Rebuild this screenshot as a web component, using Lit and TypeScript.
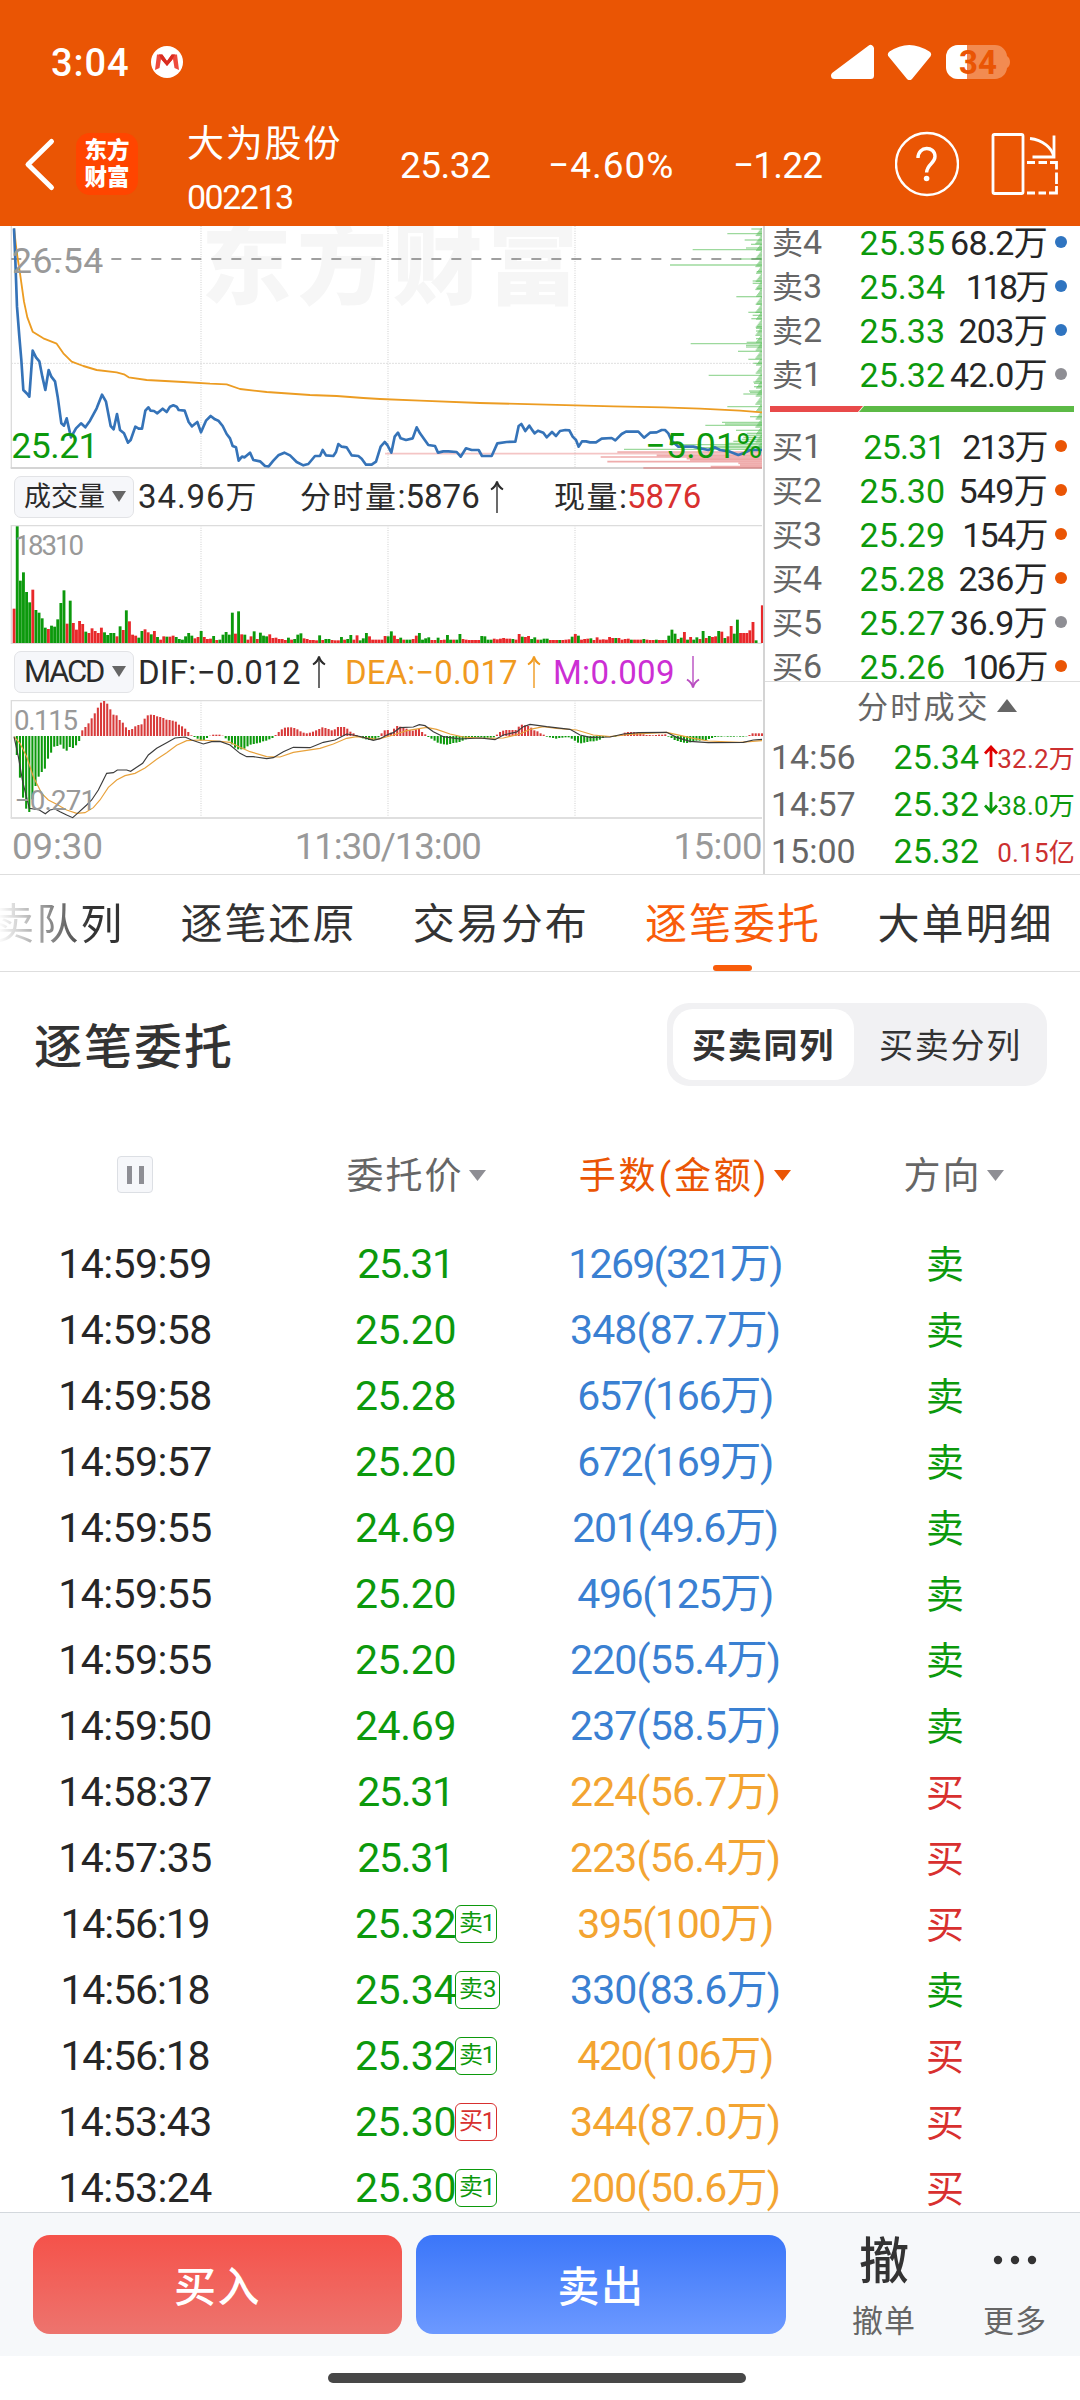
import { LitElement, html, svg, css, nothing } from "lit";
import { customElement, property } from "lit/decorators.js";

const GREEN = "#0c990c";

/* Letter spacing (em) that keeps figures with narrow "1" glyphs compact. */
const track = (t: string, base = 0): string => {
  const ones = (t.match(/1/g) ?? []).length;
  const wan = /[万亿]/.test(t) ? 0.02 : 0;
  return `letter-spacing:${(base - (0.11 * ones) / t.length - wan).toFixed(4)}em`;
};

/* Chart coordinates are in thirds of a pixel; the two halves of the session join at x = 1140. */
const line = (a: string, b: string): string => {
  const second = b
    .trim()
    .split(/\s+/)
    .map((p) => {
      const [x, y] = p.split(",").map(Number);
      return `${x + 1140},${y}`;
    });
  return a.trim() + " " + second.join(" ");
};

const PRICE = line(
  `42,25 46,120 51,260 58,350 64,420 70,510 82,522 88,530 98,392 108,412 118,424 127,470 136,510 146,450 154,470 165,484 173,530 184,610 192,617 200,595 213,652 228,625 243,610 256,622 270,602 290,565 306,524 318,545 332,618 341,628 351,582 360,630 372,640 384,668 392,660 406,620 416,626 426,626 436,572 445,562 452,572 462,573 472,580 488,566 500,576 510,560 520,556 530,560 536,570 554,572 566,606 576,619 592,606 603,637 618,602 632,588 645,598 655,602 668,618 680,642 690,655 698,678 708,682 716,722 726,710 734,712 750,698 760,720 780,724 795,738 806,739 820,722 835,706 853,698 870,706 890,726 910,736 925,732 945,708 960,708 968,690 978,706 1000,708 1008,696 1015,672 1025,680 1040,682 1055,706 1075,708 1085,716 1098,734 1115,734 1128,725`,
  `2,680 14,666 22,675 34,698 44,650 54,638 62,655 78,660 98,655 110,622 120,640 145,675 165,678 174,698 190,694 205,694 230,696 242,710 258,685 275,690 296,690 306,708 335,708 352,670 380,666 406,665 416,618 424,612 436,633 448,617 458,632 464,640 474,632 490,638 500,652 516,636 528,648 540,633 556,630 568,631 578,650 588,660 596,680 606,664 618,664 630,667 648,667 665,656 695,654 706,661 725,642 738,635 775,635 792,653 810,638 830,637 845,630 855,630 865,640 875,662 895,680 920,680 940,680 965,686 985,690 1005,682 1020,690 1050,695 1075,705 1090,700 1110,690 1130,690 1146,690`
);
const AVERAGE = line(
  `42,25 50,95 60,160 72,245 82,292 98,335 130,355 170,371 190,400 215,425 250,438 290,450 350,457 372,463 386,472 440,480 550,486 630,491 680,493 720,507 800,516 930,525 1010,528 1090,534`,
  `0,537 120,542 300,549 500,554 700,559 850,562 960,566 1080,572 1146,577`
);
const DIF = line(
  `42,680 55,740 68,815 88,895 118,900 136,911 150,900 165,897 180,905 200,915 218,923 235,908 260,885 275,870 295,840 310,810 320,790 340,788 352,780 380,780 392,784 410,772 428,760 445,735 470,715 500,698 525,684 555,681 575,690 610,702 635,695 660,694 690,705 720,730 740,740 760,740 800,746 820,743 850,725 880,712 930,713 970,697 1005,690 1040,672 1060,675 1090,682 1120,691`,
  `0,686 25,673 40,668 60,653 100,651 118,644 135,647 160,665 190,680 240,687 300,684 345,689 370,675 410,666 430,650 450,643 500,650 570,658 600,675 630,682 690,681 730,672 775,668 860,667 890,682 930,694 985,698 1090,697 1120,690 1146,688`
);
const DEA = line(
  `42,680 60,700 80,740 100,800 125,850 145,870 170,883 200,900 230,910 255,908 280,893 300,870 325,832 350,810 375,797 405,790 435,774 470,748 500,728 530,706 560,692 600,690 650,693 690,697 720,712 750,725 800,740 840,741 880,727 960,715 1000,702 1040,685 1070,680 1130,688`,
  `0,686 40,675 80,662 140,652 170,658 210,672 250,681 310,685 370,684 420,672 450,658 490,650 530,655 590,660 640,675 690,680 740,674 800,670 860,667 890,674 940,685 985,693 1080,697 1146,692`
);

/* Per-minute volume: positive is an up minute (red), negative a down minute (green). */
const VOLUME = [
  103, -350, -187, -212, -153, -122, 160, -99, -91, -74, -46, 42, -52, -49, -71, -120, -158, 58, -127, 60,
  40, 66, 57, -34, 30, 44, 36, 30, 46, -32, -24, -30, -30, 20, -50, 39, -98, 65, 25, 22,
  -16, -36, 41, 32, -26, 36, -18, 10, 20, -19, 19, 22, -18, -12, -10, -20, -30, -22, 14, 18,
  -36, 18, 12, 13, -21, 9, -10, -25, -33, -25, -91, 28, -95, 26, -25, 10, 20, -35, 12, -31,
  -22, -20, 26, 15, 16, 12, 12, 9, -16, 10, -12, -25, -29, 14, 12, 9, 9, 8, -23, 9,
  -12, -12, 9, 8, 8, -18, 10, -12, -24, 10, 23, -8, -14, -30, 20, 10, 10, 10, 10, 21,
  -20, -35, 22, 12, -16, 10, -10, -10, 12, 22, -30, -10, -14, -17, 9, 9, -16, 9, 10, -24,
  -10, 10, -10, -27, 12, 10, 9, 9, 9, 9, -21, -20, -10, -10, 13, 11, 13, 15, 13, 13,
  -12, 10, 27, -19, 18, 21, -12, -17, 10, -10, -13, -13, 9, 9, 9, -9, 9, 10, 11, -19,
  27, -22, 10, 12, 13, -14, 9, 17, 10, 11, 10, 18, 15, -15, 15, 10, 12, 13, -10, 10,
  10, 10, -12, 10, 9, 9, -10, 9, 9, 9, -22, -40, -28, 12, -16, 33, -10, 18, -10, -17,
  12, -36, 15, -21, 18, 20, -36, 34, -15, 20, 51, -28, -70, 30, 30, 30, 38, 63, -8, 0, 113,
];

const MACD = [
  0, -57, -125, -185, -218, -228, -190, -150, -122, -108, -98, -68, -50, -32, -30, -26, -38, -44, -33, -36,
  -28, -15, 17, 27, 38, 53, 68, 85, 100, 105, 97, 80, 64, 62, 48, 40, 26, 18, 21, 29,
  33, 35, 52, 62, 64, 63, 59, 57, 54, 49, 48, 46, 43, 34, 29, 22, 12, 2, -3, -8,
  -13, -12, -6, 1, 4, 4, 4, 1, -7, -14, -25, -35, -40, -40, -38, -31, -26, -24, -22, -20,
  -16, -14, -10, -6, 3, 12, 20, 25, 26, 26, 24, 20, 14, 10, 8, 10, 13, 17, 21, 26,
  24, 21, 17, 20, 27, 27, 27, 22, 13, 8, 3, -3, -7, -10, -12, -12, -11, -4, 8, 17,
  18, 10, 22, 30, 28, 26, 22, 18, 16, 20, 22, 12, 5, -3, -8, -14, -20, -23, -25, -26,
  -24, -21, -20, -18, -14, -10, -7, -6, -4, -3, -4, -6, -5, -5, -4, 4, 12, 16, 18, 18,
  18, 18, 28, 34, 32, 30, 25, 17, 14, 8, 4, -2, -4, -6, -8, -6, -5, -4, -4, -8,
  -14, -20, -22, -20, -18, -16, -16, -14, -11, -6, -3, -2, -2, -2, 2, 4, 10, 12, 12, 12,
  10, 9, 5, 3, 3, 2, 3, 4, 4, 5, -2, -6, -12, -15, -18, -20, -21, -19, -16, -14,
  -14, -12, -12, -9, -6, -3, -2, -2, -1, -2, -2, -2, -1, -2, -2, -1, 3, 8, 8, 8, 8,
];

/* Price distribution along the right edge: [y, left edge]. */
const CHIPS_DOWN: [number, number][] = [
  [27, 1114], [41, 1042], [60, 1094], [73, 1113], [84, 1098], [89, 938], [117, 1080], [135, 870], [155, 1130],
  [183, 1118], [190, 1118], [205, 1130], [230, 1069], [252, 1130], [277, 1105], [286, 1118], [296, 1114],
  [320, 1130], [325, 1128], [333, 1128], [356, 1128], [367, 1100], [371, 932], [376, 1098], [381, 1098], [394, 1074],
  [418, 1105], [430, 1120], [466, 986], [486, 1120], [490, 1122], [500, 1122], [513, 1107], [517, 1110], [522, 1090],
  [560, 1042], [590, 1110], [607, 1026], [612, 1035], [616, 976], [631, 1068], [640, 1100], [646, 1080], [652, 1090],
  [658, 1085], [664, 1060], [670, 1040], [674, 900], [679, 1000], [683, 940], [688, 732],
];
const CHIPS_UP: [number, number][] = [
  [696, 712], [701, 15], [706, 830], [711, 662], [716, 920], [720, 930], [725, 682], [730, 1075], [735, 1080], [740, 992], [744, 790],
];

const bars = (data: number[], zero: number, w: number, opp: boolean) =>
  data.map((v, i) => {
    if (!v) return nothing;
    const h = Math.abs(v);
    const x = 38 + i * 9.353;
    const y = opp ? (v > 0 ? zero - h : zero) : zero - h;
    return svg`<rect x=${x} y=${y} width=${w} height=${h} fill=${v > 0 ? (opp ? "#d83a3a" : "#e8282a") : GREEN}></rect>`;
  });

const grid = (top: number, bottom: number) => svg`
  <g stroke="#dcdcdc" stroke-width="4" stroke-dasharray="3 4">
    <line x1="603" x2="603" y1=${top} y2=${bottom}></line>
    <line x1="1164" x2="1164" y1=${top} y2=${bottom}></line>
    <line x1="1725" x2="1725" y1=${top} y2=${bottom}></line>
  </g>`;

const arrow = (color: string, down = false) => html`
  <svg width="14" height="34" viewBox="0 0 14 34" fill="none" stroke=${color}>
    <g transform=${down ? "rotate(180 7 17)" : ""}>
      <path d="M7 33V2" stroke-width="1.4"></path>
      <path d="M1 9.500Q6 6.500 7 1.500Q8 6.500 13 9.500" stroke-width="2"></path>
    </g>
  </svg>`;

@customElement("quote-header")
class QuoteHeader extends LitElement {
  static styles = css`
    :host { display: block; height: 226px; background: #ea5504; color: #fff; font-family: Roboto, "Noto Sans CJK SC", sans-serif; }
    .status { height: 102px; box-sizing: border-box; padding: 22px 70px 0 51px; display: flex; align-items: center; }
    .clock { width: 100px; font-size: 38px; font-weight: 500; line-height: 80px; letter-spacing: 0.9px; padding-top: 2px; }
    .grow { flex: 1; }
    .bar { height: 124px; display: grid; grid-template-columns: 76px 111px 213px 148px 185px 162px 95px 90px; align-items: center; }
    .back { margin-left: 23px; }
    .logo { width: 62px; height: 62px; border-radius: 14px; background: #ff4500; font-size: 22.5px; line-height: 27px; font-weight: 900; display: flex; flex-direction: column; align-items: center; justify-content: center; }
    .title { padding-top: 12px; }
    .name { font-size: 37px; line-height: 46px; letter-spacing: 1.8px; }
    .code { font-size: 34px; line-height: 42px; letter-spacing: -1.5px; margin-top: 8px; }
    .num { font-size: 37px; line-height: 52px; padding-top: 3px; white-space: nowrap; letter-spacing: -0.5px; }
    .pct { letter-spacing: 1px; }
    svg { display: block; }
  `;
  render() {
    return html`
      <div class="status">
        <span class="clock">3:04</span>
        <svg width="32" height="32" viewBox="0 0 32 32">
          <circle cx="16" cy="16" r="16" fill="#fff"></circle>
          <path d="M6 8.500L11 8.500L16 15L21 8.500L26 8.500L28 24L23.500 22L22 13L16 20L10 13L8.500 22L4 24Z" fill="#ee4a3c"></path>
          <path d="M8 8.500H11.500L16 15L20.500 8.500H24L21 14L16 20L10 13Z" fill="#d92c20"></path>
        </svg>
        <span class="grow"></span>
        <svg width="180" height="36" viewBox="830 44 180 36">
          <path d="M834.500 75.500L870.500 48.500V75.500Z" fill="#fff" stroke="#fff" stroke-width="7" stroke-linejoin="round"></path>
          <path d="M891.500 54.500Q909 42.500 927.500 54.500L909.500 76.500Z" fill="#fff" stroke="#fff" stroke-width="7" stroke-linejoin="round"></path>
          <path d="M958 45H995A12 12 0 0 1 1007 56Q1010 58 1010 62T1007 68A12 12 0 0 1 995 79H958A12 12 0 0 1 946 67V57A12 12 0 0 1 958 45Z" fill="#f28b51"></path>
          <path d="M967 45H958A12 12 0 0 0 946 57V67A12 12 0 0 0 958 79H967Z" fill="#fff"></path>
          <text x="959" y="74" font-size="33" font-weight="700" fill="#ea5504" textLength="38">34</text>
        </svg>
      </div>
      <div class="bar">
        <svg class="back" width="34" height="56" viewBox="0 0 34 56" fill="none" stroke="#fff" stroke-width="5" stroke-linecap="round" stroke-linejoin="round">
          <path d="M28.500 5.500L5 28.500L28.500 51.500"></path>
        </svg>
        <div class="logo"><span>东方</span><span>财富</span></div>
        <div class="title"><div class="name">大为股份</div><div class="code">002213</div></div>
        <div class="num">25.32</div>
        <div class="num pct">−4.60%</div>
        <div class="num" style=${track("−1.22")}>−1.22</div>
        <svg width="64" height="66" viewBox="895 131 64 66" fill="none" stroke="#fff">
          <circle cx="927" cy="164" r="31" stroke-width="2.400"></circle>
          <path d="M918 158C918 145.500 935 145.500 935 156.500C935 163.500 927 164 926.600 172.500" stroke-width="3.400"></path>
          <circle cx="926.600" cy="178.500" r="2.800" fill="#fff" stroke="none"></circle>
        </svg>
        <svg width="68" height="64" viewBox="989 132 68 64" fill="none" stroke="#fff" stroke-width="2.800">
          <rect x="992" y="134.500" width="30" height="59" rx="1.500"></rect>
          <path d="M1029 138.500C1042 140 1051 148 1052.500 156"></path>
          <path d="M1053 135.500V157H1031.500"></path>
          <path d="M1026 162.500H1034M1037.500 162.500H1046M1049 162.500H1055.500V169.500M1055.500 172.500V184M1055.500 186V193H1048M1045 193H1037.500M1034 193H1026"></path>
        </svg>
      </div>`;
  }
}

@customElement("intraday-charts")
class IntradayCharts extends LitElement {
  static styles = css`
    :host { display: block; width: 763px; height: 648px; font-family: Roboto, "Noto Sans CJK SC", sans-serif; color: #2b2b2b; }
    svg { display: block; }
    .legend { height: 55px; display: grid; align-items: center; font-size: 33px; line-height: 50px; white-space: nowrap; padding: 0 0 2px 14px; box-sizing: border-box; }
    .vol { grid-template-columns: 124px 162px 190px 64px 200px; }
    .macd { grid-template-columns: 124px 174px 33px 182px 26px 133px 20px; padding-bottom: 2px; }
    .text { padding-top: 2px; }
    .pill { width: 120px; height: 42px; box-sizing: border-box; border: 1px solid #e2e3e6; border-radius: 7px; background: #f6f7fa; display: flex; align-items: center; justify-content: space-between; padding: 0 7px 0 9px; font-size: 27px; line-height: 38px; }
    .latin { font-size: 31px; letter-spacing: -2.2px; }
    .total { letter-spacing: 0.9px; }
    .dif { letter-spacing: 0.45px; }
    .dea { color: #f09a1f; letter-spacing: 0.1px; }
    .m { color: #cc2fd4; letter-spacing: 0.3px; }
    .now { color: #d8302f; }
    .cjk { font-size: 31px; letter-spacing: 1.5px; }
    .axis { height: 54px; display: flex; justify-content: space-between; align-items: center; padding: 0 1px 1px 12px; box-sizing: border-box; font-size: 36.5px; line-height: 50px; color: #999; }
    .axis .mid { margin-right: 1px; letter-spacing: -1px; }
    .axis .end { letter-spacing: -0.5px; }
  `;
  render() {
    return html`
      <svg width="763" height="244" viewBox="0 18 2289 732" font-family="Roboto, sans-serif">
        <text x="604" y="232" font-family="Noto Sans CJK SC" font-weight="900" font-size="270" fill="#f6f6f6" textLength="1130">东方财富</text>
        ${grid(18, 744)}
        <line x1="34" x2="2286" y1="430" y2="430" stroke="#cfcfcf" stroke-width="3" stroke-dasharray="4 5"></line>
        <line x1="34" x2="34" y1="18" y2="744" stroke="#dcdcdc" stroke-width="4"></line>
        <line x1="32" x2="2286" y1="744" y2="744" stroke="#d4d4d4" stroke-width="6"></line>
        <line x1="34" x2="2286" y1="117" y2="117" stroke="#808080" stroke-width="5" stroke-dasharray="30 30"></line>
        <g stroke="#3ab03a" stroke-opacity=".5" stroke-width="4">
          ${Array.from({ length: 165 }, (_, i) => svg`<line x1=${2286 - 4 - ((i * 37) % 17)} x2="2286" y1=${26 + i * 4.05} y2=${26 + i * 4.05}></line>`)}
        </g>
        <g stroke="#5cc05c" stroke-opacity=".6" stroke-width="4">
          ${CHIPS_DOWN.map(([y, x]) => svg`<line x1=${x + 1140} x2="2286" y1=${y} y2=${y}></line>`)}
        </g>
        <g stroke="#e05a5a" stroke-width="5">
          ${CHIPS_UP.map(([y, x]) => svg`<line x1=${x + 1140} x2="2286" y1=${y} y2=${y} stroke-opacity=${x < 100 ? 0.35 : 0.5}></line>`)}
        </g>
        <polyline points=${AVERAGE} fill="none" stroke="#ec9c22" stroke-width="5.500" stroke-linejoin="round"></polyline>
        <polyline points=${PRICE} fill="none" stroke="#3573b8" stroke-width="8" stroke-linejoin="round"></polyline>
        <text x="36" y="158" font-size="107" fill="#999" textLength="274">26.54</text>
        <text x="34" y="714" font-size="107" fill=${GREEN} textLength="262">25.21</text>
        <text x="1936" y="714" font-size="107" fill=${GREEN} textLength="351">−5.01%</text>
      </svg>
      <div class="legend vol">
        <span class="pill">成交量 ${this.caret()}</span>
        <span class="text total">34.96<span class="cjk">万</span></span>
        <span class="text"><span class="cjk">分时量</span>:5876</span>
        ${arrow("#2b2b2b")}
        <span class="text"><span class="cjk">现量</span>:<span class="now">5876</span></span>
      </div>
      <svg width="763" height="120" viewBox="0 45 2289 360" font-family="Roboto, sans-serif">
        ${grid(46, 400)}
        <path d="M2286 47H34V400H2286" fill="none" stroke="#dcdcdc" stroke-width="4"></path>
        ${bars(VOLUME, 399, 8.6, false)}
        <text x="44" y="134" font-size="83" fill="#999" textLength="208">18310</text>
      </svg>
      <div class="legend macd">
        <span class="pill"><span class="latin">MACD</span> ${this.caret()}</span>
        <span class="text dif">DIF:−0.012</span>${arrow("#2b2b2b")}
        <span class="text dea">DEA:−0.017</span>${arrow("#f09a1f")}
        <span class="text m">M:0.009</span>${arrow("#b84cc0", true)}
      </div>
      <svg width="763" height="120" viewBox="0 570 2289 360" font-family="Roboto, sans-serif">
        ${grid(571, 924)}
        <path d="M2286 572H34V924" fill="none" stroke="#dcdcdc" stroke-width="4"></path>
        <path d="M32 924H2286" stroke="#dfdfdf" stroke-width="6"></path>
        ${bars(MACD, 678, 6.2, true)}
        <polyline points=${DEA} fill="none" stroke="#e8a23c" stroke-width="3.500"></polyline>
        <polyline points=${DIF} fill="none" stroke="#3c3c3c" stroke-width="3.500"></polyline>
        <text x="42" y="659" font-size="83" fill="#999" textLength="192">0.115</text>
        <text x="44" y="899" font-size="83" fill="#999" textLength="244">−0.271</text>
      </svg>
      <div class="axis"><span>09:30</span><span class="mid">11:30/13:00</span><span class="end">15:00</span></div>`;
  }
  private caret() {
    return html`<svg width="14" height="11" viewBox="0 0 14 11"><path d="M0 0H14L7 11Z" fill="#666"></path></svg>`;
  }
}

@customElement("order-book")
class OrderBook extends LitElement {
  static styles = css`
    :host { display: block; flex: 1; box-sizing: border-box; border-left: 2px solid #d4d4d4; height: 648px; font-family: Roboto, "Noto Sans CJK SC", sans-serif; }
    .level { height: 44px; line-height: 44px; font-size: 34px; display: grid; grid-template-columns: 70px 103px 102px 24px; box-sizing: border-box; padding-left: 7px; white-space: nowrap; align-items: center; }
    .label { color: #666; }
    .label .c { font-size: 31px; }
    .price { color: #0c990c; text-align: right; }
    .qty { color: #262626; text-align: right; }
    .dot { width: 12px; height: 12px; border-radius: 6px; margin-left: 8px; margin-top: -2px; }
    .blue { background: #2f74c0; }
    .gray { background: #8e8e94; }
    .orange { background: #ea5504; }
    .levels { height: 455px; overflow: hidden; border-bottom: 1px solid #dedede; }
    .ratio { display: block; margin: 10px 0 12px 5px; }
    .first { margin-top: -6px; }
    .head { height: 49px; display: flex; align-items: center; gap: 7px; padding: 2px 0 0 92px; box-sizing: border-box; color: #666; font-size: 31px; letter-spacing: 2.2px; line-height: 46px; }
    .head svg { margin-bottom: 5px; }
    .trade { height: 47px; line-height: 47px; display: grid; grid-template-columns: 111px 97px 23px 73px; padding-left: 6px; font-size: 34px; align-items: center; white-space: nowrap; color: #666; }
    .p { color: #0c990c; text-align: right; }
    .v { font-size: 26px; padding-top: 5px; justify-self: end; letter-spacing: 0.2px; }
    .t { letter-spacing: 0; }
    .up { color: #cc3030; }
    .down { color: #0c990c; }
    .trade svg { margin-left: 5px; display: block; margin-top: -2px; }
  `;
  private level(side: string, n: string, p: string, q: string, dot: string) {
    return html`<div class="level">
      <span class="label"><span class="c">${side}</span>${n}</span>
      <span class="price" style=${track(p)}>${p}</span>
      <span class="qty" style=${track(q)}>${q}</span>
      <span class="dot ${dot}"></span>
    </div>`;
  }
  render() {
    return html`
      <div class="levels">
        <div class="first">
          ${this.level("卖", "4", "25.35", "68.2万", "blue")} ${this.level("卖", "3", "25.34", "118万", "blue")}
          ${this.level("卖", "2", "25.33", "203万", "blue")} ${this.level("卖", "1", "25.32", "42.0万", "gray")}
        </div>
        <svg class="ratio" width="304" height="6" viewBox="0 0 304 6">
          <path d="M0 0H93L88 6H0Z" fill="#e84a4a"></path>
          <path d="M94 0H304V6H89Z" fill="#5cba46"></path>
        </svg>
        ${this.level("买", "1", "25.31", "213万", "orange")} ${this.level("买", "2", "25.30", "549万", "orange")}
        ${this.level("买", "3", "25.29", "154万", "orange")} ${this.level("买", "4", "25.28", "236万", "orange")}
        ${this.level("买", "5", "25.27", "36.9万", "gray")} ${this.level("买", "6", "25.26", "106万", "orange")}
      </div>
      <div class="head">分时成交<svg width="20" height="13" viewBox="0 0 20 13"><path d="M10 0L20 13H0Z" fill="#666"></path></svg></div>
      ${this.trade("14:56", "25.34", "up", "32.2万", true)} ${this.trade("14:57", "25.32", "down", "38.0万", true)}
      ${this.trade("15:00", "25.32", "up", "0.15亿", false)}`;
  }
  private trade(t: string, p: string, dir: string, v: string, mark: boolean) {
    return html`<div class="trade">
      <span class="t">${t}</span><span class="p">${p}</span>
      <span>${mark
        ? html`<svg width="14" height="22" viewBox="0 0 14 22" fill="none" stroke=${dir === "up" ? "#e00000" : GREEN} stroke-width="2.800">
            <path d=${dir === "up" ? "M7 22V2M1 8.500L7 2L13 8.500" : "M7 0V20M1 13.500L7 20L13 13.500"}></path>
          </svg>`
        : nothing}</span>
      <span class="v ${dir}">${v}</span>
    </div>`;
  }
}

@customElement("detail-tabs")
class DetailTabs extends LitElement {
  static styles = css`
    :host { display: block; height: 98px; box-sizing: border-box; border-top: 1px solid #dedede; border-bottom: 1px solid #dedede; font-family: Roboto, "Noto Sans CJK SC", sans-serif; overflow: hidden; }
    .strip { display: flex; gap: 56.3px; padding-left: 180.5px; font-size: 42px; letter-spacing: 2px; color: #333; height: 96px; line-height: 97px; white-space: nowrap; }
    .tab { width: 176px; flex: none; position: relative; padding-top: 1px; box-sizing: border-box; }
    .cut { width: 132px; margin-left: -188.300px; background: linear-gradient(90deg, #fff 6px, #333 98px); -webkit-background-clip: text; background-clip: text; color: transparent; }
    .on { color: #f95c0a; }
    .on::after { content: ""; position: absolute; left: 68px; bottom: 0; width: 39px; height: 6px; border-radius: 3px; background: #f95c0a; }
  `;
  render() {
    return html`<div class="strip">
      <span class="tab cut">卖队列</span><span class="tab">逐笔还原</span><span class="tab">交易分布</span
      ><span class="tab on">逐笔委托</span><span class="tab">大单明细</span>
    </div>`;
  }
}

interface Order { time: string; price: string; amount: string; side: string; tag?: string }
const o = (time: string, price: string, amount: string, side: string, tag?: string): Order => ({ time, price, amount, side, tag });
const ORDERS: Order[] = [
  o("14:59:59", "25.31", "1269(321万)", "卖"),
  o("14:59:58", "25.20", "348(87.7万)", "卖"),
  o("14:59:58", "25.28", "657(166万)", "卖"),
  o("14:59:57", "25.20", "672(169万)", "卖"),
  o("14:59:55", "24.69", "201(49.6万)", "卖"),
  o("14:59:55", "25.20", "496(125万)", "卖"),
  o("14:59:55", "25.20", "220(55.4万)", "卖"),
  o("14:59:50", "24.69", "237(58.5万)", "卖"),
  o("14:58:37", "25.31", "224(56.7万)", "买"),
  o("14:57:35", "25.31", "223(56.4万)", "买"),
  o("14:56:19", "25.32", "395(100万)", "买", "卖1"),
  o("14:56:18", "25.34", "330(83.6万)", "卖", "卖3"),
  o("14:56:18", "25.32", "420(106万)", "买", "卖1"),
  o("14:53:43", "25.30", "344(87.0万)", "买", "买1"),
  o("14:53:24", "25.30", "200(50.6万)", "买", "卖1"),
];

@customElement("order-list")
class OrderList extends LitElement {
  @property({ attribute: false }) rows: Order[] = [];
  static styles = css`
    :host { display: block; height: 1240px; overflow: hidden; font-family: Roboto, "Noto Sans CJK SC", sans-serif; }
    .top { display: flex; justify-content: space-between; align-items: center; padding: 31px 33px 0 34px; height: 83px; }
    h2 { margin: 0; font-size: 48px; font-weight: 500; letter-spacing: 2px; line-height: 80px; color: #333; padding-top: 6px; }
    .seg { width: 380px; height: 83px; box-sizing: border-box; padding: 6px; border-radius: 22px; background: #f1f1f3; display: flex; font-size: 34px; letter-spacing: 1.8px; color: #333; line-height: 74px; }
    .seg span { text-align: center; flex: 1; padding-left: 6px; }
    .seg .on { flex: none; width: 181px; padding-left: 0; background: #fff; border-radius: 20px; font-weight: 700; }
    .row { display: grid; grid-template-columns: repeat(4, 270px); height: 66px; line-height: 66px; font-size: 41px; text-align: center; color: #262626; white-space: nowrap; }
    .head { height: 145px; line-height: 44px; font-size: 37px; letter-spacing: 2px; color: #666; padding-top: 69px; box-sizing: border-box; }
    .head .hot { color: #ea5504; letter-spacing: 2.8px; padding-right: 2px; }
    .head .last { padding-right: 5px; }
    .head .caret { display: inline-block; margin: 0 -22px 7px 5px; vertical-align: middle; }
    .pause { width: 36px; height: 37px; box-sizing: border-box; border: 1.500px solid #dcdfe4; border-radius: 4px; background: #f6f7fa; display: flex; justify-content: center; align-items: center; gap: 7px; margin: 1px auto 0; }
    .pause i { width: 5px; height: 18px; background: #8e8e94; }
    .price { color: #0c990c; position: relative; padding-left: 1px; }
    .side { font-size: 38px; padding-top: 1px; }
    .sell { color: #0c990c; }
    .buy { color: #d8302f; }
    .blue { color: #3a80d2; }
    .gold { color: #f3a431; }
    .tag { position: absolute; left: 185px; top: 14px; height: 38px; box-sizing: border-box; border: 1.500px solid currentColor; border-radius: 6px; padding: 0 2px 0 3px; font-size: 24px; line-height: 35px; }
  `;
  private caret(color: string) {
    return html`<svg class="caret" width="17" height="11" viewBox="0 0 17 11"><path d="M0 0H17L8.500 11Z" fill=${color}></path></svg>`;
  }
  render() {
    return html`
      <div class="top">
        <h2>逐笔委托</h2>
        <div class="seg"><span class="on">买卖同列</span><span>买卖分列</span></div>
      </div>
      <div class="row head">
        <span><span class="pause"><i></i><i></i></span></span>
        <span>委托价${this.caret("#8e8e94")}</span>
        <span class="hot">手数(金额)${this.caret("#ea5504")}</span>
        <span class="last">方向${this.caret("#8e8e94")}</span>
      </div>
      ${this.rows.map((r) => html`<div class="row">
        <span style=${track(r.time)}>${r.time}</span>
        <span class="price"><span style=${track(r.price, -0.009)}>${r.price}</span>${r.tag
          ? html`<span class="tag ${r.tag[0] === "卖" ? "sell" : "buy"}" style=${track(r.tag)}>${r.tag}</span>`
          : nothing}</span>
        <span class=${r.side === "卖" ? "blue" : "gold"} style=${track(r.amount)}>${r.amount}</span>
        <span class="side ${r.side === "卖" ? "sell" : "buy"}">${r.side}</span>
      </div>`)}`;
  }
}

@customElement("trade-bar")
class TradeBar extends LitElement {
  static styles = css`
    :host { display: block; height: 188px; background: #fff; font-family: "Noto Sans CJK SC", sans-serif; }
    .bar { height: 144px; box-sizing: border-box; border-top: 1px solid #d3d8dd; background: #f6f8fa; display: flex; align-items: flex-start; padding: 22px 0 0 33px; }
    .btn { width: 369px; height: 99px; border-radius: 17px; color: #fff; text-align: center; font-size: 42px; font-weight: 500; letter-spacing: 1.5px; line-height: 97px; margin-right: 14px; }
    .buy { background: linear-gradient(#f5524a, #ed746e); }
    .sell { background: linear-gradient(#3b76f9, #6c99ff); width: 370px; }
    .act { width: 130px; display: flex; flex-direction: column; align-items: center; color: #666; font-size: 31px; letter-spacing: 1px; line-height: 40px; margin-left: 19px; }
    .act + .act { margin-left: 1px; }
    .big { height: 64px; font-size: 50px; font-weight: 500; line-height: 44px; color: #333; letter-spacing: 0; box-sizing: border-box; display: block; }
    .home { width: 418px; height: 10px; border-radius: 5px; background: #474747; margin: 17px auto 0 328px; }
  `;
  render() {
    return html`
      <div class="bar">
        <div class="btn buy">买入</div>
        <div class="btn sell">卖出</div>
        <div class="act"><span class="big">撤</span><span>撤单</span></div>
        <div class="act">
          <svg class="big" width="50" height="64" viewBox="0 0 50 64" fill="#333">
            <circle cx="8" cy="25" r="4.200"></circle><circle cx="25" cy="25" r="4.200"></circle><circle cx="42" cy="25" r="4.200"></circle>
          </svg>
          <span>更多</span>
        </div>
      </div>
      <div class="home"></div>`;
  }
}

@customElement("app-root")
class AppRoot extends LitElement {
  static styles = css`
    :host { display: block; width: 1080px; height: 2400px; overflow: hidden; background: #fff; }
    .quote { display: flex; height: 648px; }
  `;
  render() {
    return html`
      <quote-header></quote-header>
      <div class="quote"><intraday-charts></intraday-charts><order-book></order-book></div>
      <detail-tabs></detail-tabs>
      <order-list .rows=${ORDERS}></order-list>
      <trade-bar></trade-bar>`;
  }
}
